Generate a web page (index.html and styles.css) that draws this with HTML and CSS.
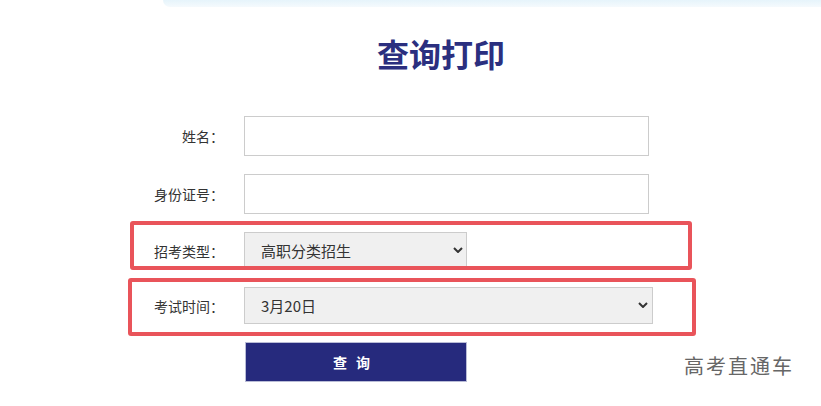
FILE: index.html
```html
<!DOCTYPE html>
<html lang="zh-CN">
<head>
    <meta charset="UTF-8">
    <meta name="viewport" content="width=device-width, initial-scale=1.0">
    <title>查询打印</title>
    <link rel="stylesheet" href="styles.css">
</head>
<body>
    <div class="top-strip"></div>

    <div class="query-box">
        <h1 class="title">查询打印</h1>

        <form class="query-form" onsubmit="return false;">
            <div class="row">
                <label class="label" for="name">姓名：</label>
                <input class="field" id="name" type="text">
            </div>
            <div class="row">
                <label class="label" for="idcard">身份证号：</label>
                <input class="field" id="idcard" type="text">
            </div>
            <div class="row">
                <label class="label" for="type">招考类型：</label>
                <div class="select-wrap short">
                    <select class="select" id="type">
                        <option>高职分类招生</option>
                    </select>
                    <svg class="chevron" viewBox="0 0 10 6" width="10" height="6"><path d="M1 1l4 4 4-4" fill="none" stroke="#333" stroke-width="2"/></svg>
                </div>
            </div>
            <div class="row">
                <label class="label" for="date">考试时间：</label>
                <div class="select-wrap long">
                    <select class="select" id="date">
                        <option>3月20日</option>
                    </select>
                    <svg class="chevron" viewBox="0 0 10 6" width="10" height="6"><path d="M1 1l4 4 4-4" fill="none" stroke="#333" stroke-width="2"/></svg>
                </div>
            </div>
            <div class="row">
                <span class="label"></span>
                <button class="submit" type="submit">查 询</button>
            </div>

            <div class="mark mark-one"></div>
            <div class="mark mark-two"></div>
        </form>
    </div>

    <div class="watermark">高考直通车</div>
</body>
</html>
```

FILE: styles.css
```css
* {
    margin: 0;
    padding: 0;
    box-sizing: border-box;
}
body {
    background: #fff;
    font-family: "Noto Sans CJK SC", "Noto Sans", sans-serif;
    color: #333;
    width: 821px;
    height: 406px;
    overflow: hidden;
    position: relative;
}
.top-strip {
    height: 7px;
    margin-left: 163px;
    background: linear-gradient(180deg, #e6f4fb 0%, #f5fafd 100%);
    border-bottom-left-radius: 18px;
}
.query-box {
    width: 622px;
    margin-left: 130px;
}
.title {
    text-align: center;
    font-size: 32px;
    line-height: 40px;
    font-weight: 700;
    color: #2b2f7f;
    margin-top: 26px;
}
.query-form {
    margin-top: 43px;
    display: flex;
    flex-direction: column;
    gap: 18px;
    position: relative;
}
.row {
    display: flex;
    align-items: center;
    gap: 20px;
}
.label {
    width: 94px;
    text-align: right;
    font-size: 14px;
    color: #333;
}
.field {
    width: 405px;
    height: 40px;
    border: 1px solid #ccc;
    background: #fff;
    outline: none;
}
.select-wrap {
    position: relative;
    height: 37px;
}
.select-wrap.short {
    width: 223px;
}
.select-wrap.long {
    width: 409px;
}
.select {
    appearance: none;
    -webkit-appearance: none;
    width: 100%;
    height: 100%;
    border: 1px solid #ccc;
    background: #f0f0f0;
    padding-left: 16px;
    font-family: "Noto Sans CJK SC", "Noto Sans", sans-serif;
    font-size: 15px;
    color: #333;
    outline: none;
}
.chevron {
    position: absolute;
    top: 15px;
    pointer-events: none;
}
.short .chevron {
    right: 4px;
}
.long .chevron {
    right: 5px;
}
.submit {
    width: 222px;
    height: 40px;
    margin-left: 1px;
    background: #262a7d;
    border: 1px solid #b9bcd6;
    color: #fff;
    font-family: "Noto Sans CJK SC", "Noto Sans", sans-serif;
    font-size: 14px;
    font-weight: 700;
    letter-spacing: 3px;
    padding-right: 6px;
    cursor: pointer;
}
.mark {
    position: absolute;
    border: 4px solid #e9545a;
    border-radius: 3px;
    pointer-events: none;
}
.mark-one {
    top: 105px;
    left: 0;
    width: 562px;
    height: 49px;
}
.mark-two {
    top: 162px;
    left: -2px;
    width: 568px;
    height: 58px;
}
.watermark {
    position: absolute;
    left: 684px;
    top: 351px;
    font-size: 20px;
    color: #666;
    letter-spacing: 2px;
}
```
